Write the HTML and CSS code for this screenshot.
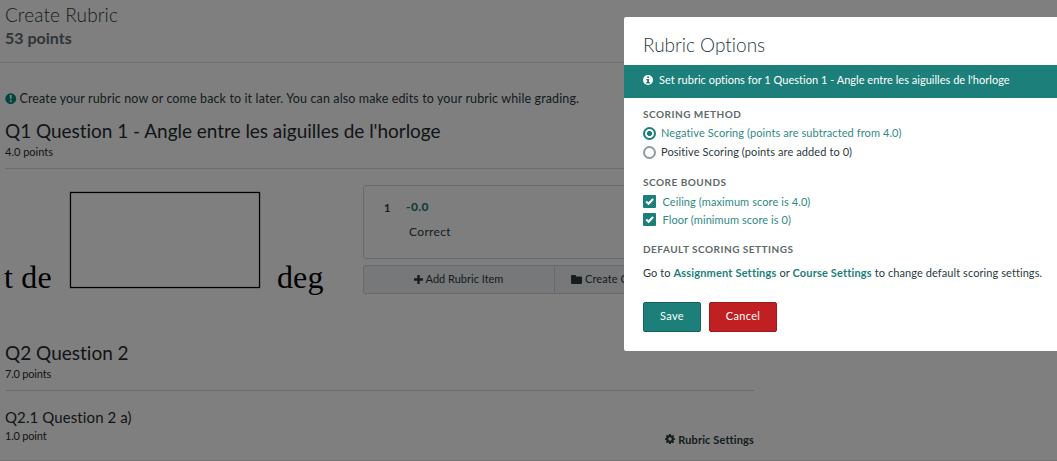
FILE: index.html
```html
<!DOCTYPE html>
<html lang="en">
<head>
<meta charset="utf-8">
<title>Create Rubric</title>
<link rel="stylesheet" href="styles.css">
</head>
<body>
<main class="page">
  <header class="page-header">
    <h1 class="title">Create Rubric</h1>
    <p class="total">53 points</p>
  </header>
  <p class="notice">
    <svg class="icon-notice" viewBox="0 0 12 12"><circle cx="6" cy="6" r="5.7" fill="#008a80"/><path d="M4.900 2h2.200l-.4 4.600H5.300zM5.100 7.500h1.800v1.900H5.100z" fill="#fff"/></svg>
    <span>Create your rubric now or come back to it later. You can also make edits to your rubric while grading.</span>
  </p>
  <section class="question question-one">
    <div class="question-head">
      <h2 class="question-title">Q1 Question 1 - Angle entre les aiguilles de l'horloge</h2>
      <p class="points">4.0 points</p>
    </div>
    <div class="question-body">
      <div class="answer">
        <span class="answer-text">t de</span>
        <span class="answer-box"></span>
        <span class="answer-text">deg</span>
      </div>
      <div class="rubric">
        <div class="rubric-item">
          <span class="item-key">1</span>
          <div class="item-main">
            <p class="item-score">-0.0</p>
            <p class="item-name">Correct</p>
          </div>
        </div>
        <div class="rubric-actions">
          <div class="action action-add"><svg class="icon-plus" viewBox="0 0 9 9"><path d="M3.300 0h2.400v3.300H9v2.400H5.700V9H3.300V5.700H0V3.300h3.300z"/></svg><span>Add Rubric Item</span></div>
          <div class="action action-group"><svg class="icon-folder" viewBox="0 0 11 9"><path d="M1 0h3q1 0 1 1v.4h5q1 0 1 1V8q0 1-1 1H1Q0 9 0 8V1q0-1 1-1z"/></svg><span>Create Group</span></div>
        </div>
      </div>
    </div>
  </section>
  <section class="question">
    <div class="question-head">
      <h2 class="question-title question-two">Q2 Question 2</h2>
      <p class="points points-tight">7.0 points</p>
    </div>
    <div class="subquestion">
      <div>
        <h3 class="sub-title">Q2.1 Question 2 a)</h3>
        <p class="points points-tight">1.0 point</p>
      </div>
      <div class="settings"><svg class="icon-gear" viewBox="0 0 12 12"><path fill-rule="evenodd" d="M5 0h2l.3 1.600 1 .4 1.300-.9L11 2.500l-.9 1.300.4 1L12 5v2l-1.500.3-.4 1 .9 1.300L9.600 11l-1.300-.9-1 .4L7 12H5l-.3-1.500-1-.4-1.300.9L1 9.600l.9-1.300-.4-1L0 7V5l1.500-.3.4-1L1 2.400 2.400 1l1.300.9 1-.4zM6 3.900a2.100 2.100 0 1 0 0 4.200 2.100 2.100 0 0 0 0-4.200z"/></svg><span>Rubric Settings</span></div>
    </div>
  </section>
  <div class="overlay">
    <div class="modal">
      <h2 class="modal-title">Rubric Options</h2>
      <p class="banner"><svg class="icon-info" viewBox="0 0 10 10"><circle cx="5" cy="5" r="5" fill="#fff"/><path d="M4.100 1.400H6V3H4.100zM3.300 3.900H6v3.200h.8v1.300H3.300V7.100h.8V5.200h-.8z" fill="#1c7f7a"/></svg><span>Set rubric options for 1 Question 1 - Angle entre les aiguilles de l'horloge</span></p>
      <div class="modal-body">
        <h3 class="label">SCORING METHOD</h3>
        <div class="options radios">
          <div class="option selected"><i class="radio"></i><span>Negative Scoring (points are subtracted from 4.0)</span></div>
          <div class="option"><i class="radio"></i><span>Positive Scoring (points are added to 0)</span></div>
        </div>
        <h3 class="label">SCORE BOUNDS</h3>
        <div class="options checks">
          <div class="option selected"><svg class="check" viewBox="0 0 13 13"><rect width="13" height="13" rx="1" fill="#1c7f7a"/><path d="M3.200 6.400l2.400 2.300 4.500-4.600" fill="none" stroke="#fff" stroke-width="2.100"/></svg><span>Ceiling (maximum score is 4.0)</span></div>
          <div class="option selected"><svg class="check" viewBox="0 0 13 13"><rect width="13" height="13" rx="1" fill="#1c7f7a"/><path d="M3.200 6.400l2.400 2.300 4.500-4.600" fill="none" stroke="#fff" stroke-width="2.100"/></svg><span>Floor (minimum score is 0)</span></div>
        </div>
        <h3 class="label">DEFAULT SCORING SETTINGS</h3>
        <p class="defaults">Go to <b>Assignment Settings</b> or <b>Course Settings</b> to change default scoring settings.</p>
        <div class="buttons">
          <button class="btn save">Save</button>
          <button class="btn cancel">Cancel</button>
        </div>
      </div>
    </div>
  </div>
</main>
</body>
</html>
```
FILE: styles.css
```css
* { box-sizing: border-box; }
body { margin: 0; background: #fff; font-family: Lato, "Open Sans", sans-serif; font-variant-ligatures: none; color: #2b3a3f; }
h1, h2, h3, p { margin: 0; font-weight: 400; }
svg { display: block; flex: none; fill: currentColor; }

.page { position: relative; width: 1057px; height: 461px; overflow: hidden; border-bottom: 1px solid #727374; }

.page-header { height: 63px; padding: 3px 5px 0; border-bottom: 1px solid #e0e2e2; }
.title { font-size: 19px; line-height: 24px; font-weight: 300; letter-spacing: .12px; }
.total { font-size: 16px; line-height: 22px; font-weight: 700; color: #5e6a6c; }

.notice { display: flex; align-items: center; gap: 3px; padding: 27px 5px 0; font-size: 12.500px; line-height: 16px; letter-spacing: .125px; }
.notice span { padding-top: 1px; }
.icon-notice { width: 11.500px; height: 11.500px; }

.question { width: 754px; padding-left: 5px; }
.question-one { height: 222px; margin-top: 12px; }
.question-head { height: 50px; border-bottom: 1px solid #d8dadb; }
.question-title { font-size: 19px; line-height: 24px; letter-spacing: -.03px; color: #1f2c30; }
.question-two { letter-spacing: 0; }
.points { margin-top: 2px; font-size: 11px; line-height: 14px; color: #1f2c30; }
.points-tight { letter-spacing: -.2px; }

.question-body { display: flex; }
.answer { display: flex; width: 358px; height: 140px; padding-top: 23px; }
.answer-text { position: relative; left: -1px; padding-top: 67px; font: 32px/36px "Liberation Serif", serif; letter-spacing: .2px; color: #000; white-space: nowrap; }
.answer-box { width: 190px; height: 96px; margin: 0 18px 0 17px; border: 1px solid #000; box-shadow: 0 0 1px #000, inset 0 0 1px #000; }
.rubric { width: 391px; padding-top: 16px; }
.rubric-item { display: flex; height: 74px; border: 1px solid #ced3d8; border-radius: 3px; background: #fcfcfc; }
.item-key { width: 42px; padding: 14px 0 0 20px; font-size: 11px; line-height: 16px; font-weight: 700; }
.item-score { margin-top: 13px; font-size: 12px; line-height: 16px; font-weight: 900; letter-spacing: .43px; color: #1c7f7a; }
.item-name { padding: 9px 0 0 3px; font-size: 12px; line-height: 16px; letter-spacing: .35px; }
.rubric-actions { display: flex; height: 29px; margin-top: 6px; border: 1px solid #ced3d8; border-radius: 2px; background: #eef1f5; }
.action { display: flex; align-items: center; justify-content: center; flex: 1; padding-bottom: 1px; font-size: 11px; line-height: 14px; }
.action-add { flex: none; width: 191px; gap: 3px; padding-right: 1px; border-right: 1px solid #ced3d8; }
.action-group { justify-content: flex-start; gap: 3px; padding-left: 16px; letter-spacing: .1px; }
.icon-plus { width: 9px; height: 9px; }
.icon-folder { width: 11px; height: 9px; }

.subquestion { display: flex; justify-content: space-between; padding-top: 16px; }
.sub-title { font-size: 15px; line-height: 20px; letter-spacing: .1px; color: #1f2c30; }
.settings { display: flex; align-items: center; gap: 3px; height: 14px; margin-top: 25px; font-size: 11px; font-weight: 700; letter-spacing: .13px; }
.icon-gear { width: 10px; height: 10px; }

.overlay { position: absolute; left: 0; top: 0; width: 1057px; height: 461px; background: rgba(0, 0, 0, .5); }
.modal { position: absolute; left: 624px; top: 17px; width: 433px; height: 334px; background: #fff; border-radius: 2px 0 0 2px; }
.modal-title { padding: 16px 19px 8px; font-size: 19px; line-height: 24px; font-weight: 300; }
.banner { display: flex; align-items: center; gap: 6px; height: 33px; padding: 0 19px 3px; background: #1c7f7a; color: #fff; font-size: 11px; letter-spacing: .02px; }
.banner span { padding-bottom: 1px; }
.icon-info { width: 10px; height: 10px; }
.modal-body { padding: 9px 0 0 19px; }
.label { font-size: 10px; line-height: 14px; font-weight: 700; letter-spacing: .5px; color: #5e6a6c; }
.options { display: flex; flex-direction: column; }
.radios { height: 54px; padding-top: 3px; gap: 1px; }
.checks { height: 53px; padding-top: 3px; }
.option { display: flex; align-items: center; height: 18px; font-size: 11px; letter-spacing: .09px; color: #2b3a3f; }
.radios span { padding-bottom: 1px; }
.selected { color: #2f8a85; }
.radio { width: 13px; height: 13px; margin-right: 5px; border: 2px solid #8f9b9c; border-radius: 50%; }
.selected .radio { border-color: #1c7f7a; background: radial-gradient(circle, #1c7f7a 2.200px, #fff 2.900px); }
.check { width: 13px; height: 13px; margin-right: 6.500px; }
.defaults { margin-top: 9px; font-size: 11px; line-height: 16px; letter-spacing: .08px; white-space: nowrap; }
.defaults b { font-weight: 700; letter-spacing: .17px; color: #1c7f7a; }
.buttons { display: flex; gap: 8px; margin-top: 21px; }
.btn { height: 30px; padding: 0 0 3px; border: 1px solid #17615d; border-radius: 2px; color: #fff; font: 11px Lato, sans-serif; letter-spacing: .3px; }
.save { width: 58px; background: #1c7f7a; }
.cancel { width: 68px; background: #c02022; border-color: #981b1d; }
```
